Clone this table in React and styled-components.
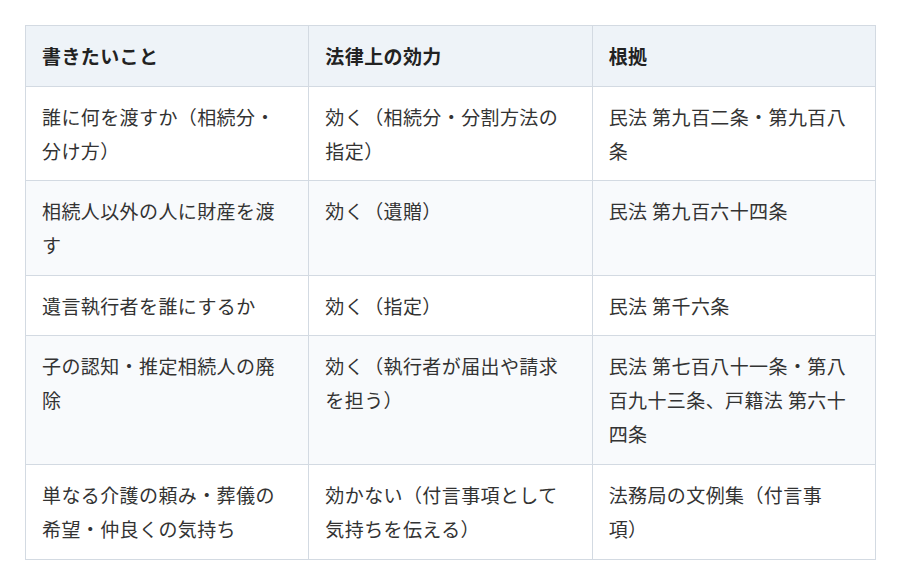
import React from 'react';
import styled, { createGlobalStyle } from 'styled-components';

const GlobalStyle = createGlobalStyle`
  body {
    margin: 0;
    background: #fff;
    font-family: "Noto Sans CJK JP", "Noto Sans", sans-serif;
    color: #333;
  }
`;

const Page = styled.div`
  padding: 25px 24px 24px 25px;
`;

const Table = styled.table`
  width: 100%;
  border-collapse: collapse;
  table-layout: fixed;
  font-size: 19px;
  letter-spacing: 0.4px;
  line-height: 34px;
`;

const HeadCell = styled.th`
  background: #eef3f8;
  color: #222;
  font-weight: 700;
  text-align: left;
  padding: 13px 24px 12.6px 16px;
  border: 1px solid #d3dae2;
`;

const Row = styled.tr`
  background: ${(p) => (p.$striped ? '#f8fafc' : '#fff')};
`;

const Cell = styled.td`
  vertical-align: top;
  padding: 13px 24px 12.6px 16px;
  border: 1px solid #d3dae2;
`;

const rows = [
  ['誰に何を渡すか（相続分・分け方）', '効く（相続分・分割方法の指定）', '民法 第九百二条・第九百八条'],
  ['相続人以外の人に財産を渡す', '効く（遺贈）', '民法 第九百六十四条'],
  ['遺言執行者を誰にするか', '効く（指定）', '民法 第千六条'],
  ['子の認知・推定相続人の廃除', '効く（執行者が届出や請求を担う）', '民法 第七百八十一条・第八百九十三条、戸籍法 第六十四条'],
  ['単なる介護の頼み・葬儀の希望・仲良くの気持ち', '効かない（付言事項として気持ちを伝える）', '法務局の文例集（付言事項）'],
];

export default function App() {
  return (
    <>
      <GlobalStyle />
      <Page>
        <Table>
          <thead>
            <tr>
              <HeadCell>書きたいこと</HeadCell>
              <HeadCell>法律上の効力</HeadCell>
              <HeadCell>根拠</HeadCell>
            </tr>
          </thead>
          <tbody>
            {rows.map((r, i) => (
              <Row key={i} $striped={i % 2 === 1}>
                {r.map((c, j) => (
                  <Cell key={j}>{c}</Cell>
                ))}
              </Row>
            ))}
          </tbody>
        </Table>
      </Page>
    </>
  );
}
